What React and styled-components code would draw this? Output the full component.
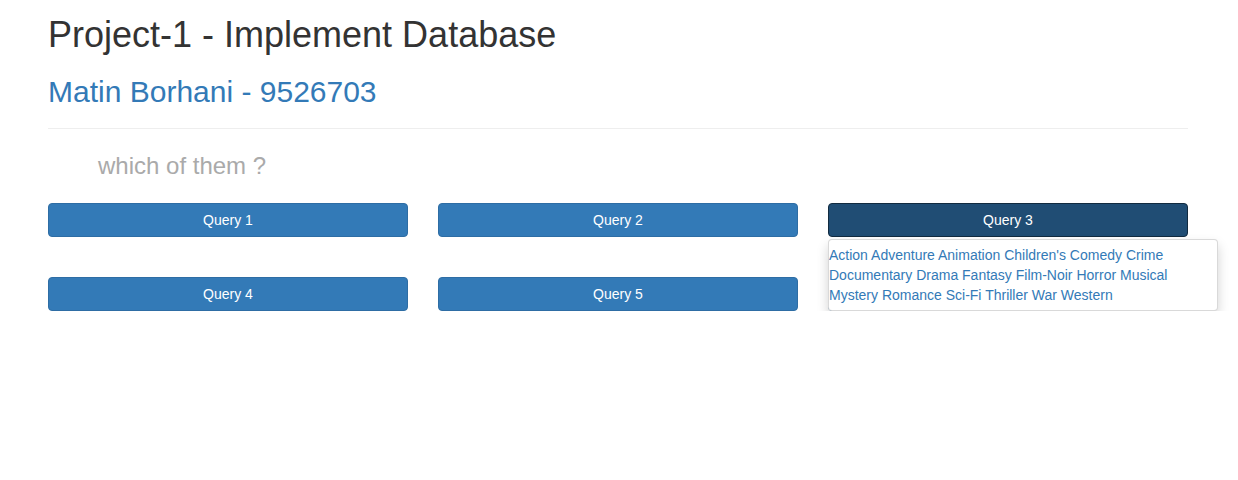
import React from 'react';
import styled, { createGlobalStyle } from 'styled-components';

const GlobalStyle = createGlobalStyle`
    body {
        margin: 0;
        background: #fff;
        font-family: "Liberation Sans", Arial, Helvetica, sans-serif;
        font-size: 14px;
        line-height: 1.42857;
        color: #333;
    }
`

const Page = styled.div`
    width: 1140px;
    padding: 15px 0 0 48px;
`

const Title = styled.h1`
    font-size: 36px;
    font-weight: 500;
    line-height: 1.1;
    margin: 0 0 20px 0;
    color: #333;
`

const Subtitle = styled.h2`
    font-size: 30px;
    font-weight: 500;
    line-height: 1.1;
    margin: 0;
    color: #337ab7;
`

const Rule = styled.hr`
    border: 0;
    border-top: 1px solid #eee;
    margin: 20px 0 24px 0;
`

const Question = styled.h3`
    font-size: 24px;
    font-weight: 500;
    line-height: 1.1;
    margin: 0 0 24px 0;
    padding-left: 50px;
    color: #aaa;
`

const Grid = styled.div`
    display: grid;
    grid-template-columns: repeat(3, 360px);
    column-gap: 30px;
    row-gap: 40px;
`

const Cell = styled.div`
    position: relative;
`

const QueryButton = styled.button`
    display: block;
    width: 100%;
    height: 34px;
    padding: 6px 12px;
    font-family: inherit;
    font-size: 14px;
    line-height: 20px;
    color: #fff;
    background-color: ${p => (p.$active ? '#204d74' : '#337ab7')};
    border: 1px solid ${p => (p.$active ? '#122b40' : '#2e6da4')};
    border-radius: 4px;
    cursor: pointer;
`

const Menu = styled.div`
    position: absolute;
    top: 100%;
    left: 0;
    z-index: 10;
    margin-top: 2px;
    width: 390px;
    box-sizing: border-box;
    padding: 5px 0;
    background: #fff;
    border: 1px solid rgba(0, 0, 0, 0.15);
    border-radius: 4px;
    box-shadow: 0 6px 12px rgba(0, 0, 0, 0.175);
    font-size: 14px;
    line-height: 20px;
`

const Genre = styled.a`
    color: #337ab7;
    text-decoration: none;
`

const genres = [
    'Action', 'Adventure', 'Animation', "Children's", 'Comedy', 'Crime',
    'Documentary', 'Drama', 'Fantasy', 'Film-Noir', 'Horror', 'Musical',
    'Mystery', 'Romance', 'Sci-Fi', 'Thriller', 'War', 'Western'
]

const App = () => {
    return (
        <>
            <GlobalStyle />
            <Page>
                <Title>Project-1 - Implement Database</Title>
                <Subtitle>Matin Borhani - 9526703</Subtitle>
                <Rule />
                <Question>which of them ?</Question>
                <Grid>
                    <Cell><QueryButton>Query 1</QueryButton></Cell>
                    <Cell><QueryButton>Query 2</QueryButton></Cell>
                    <Cell>
                        <QueryButton $active>Query 3</QueryButton>
                        <Menu>
                            {genres.map((g, i) => (
                                <React.Fragment key={g}>
                                    <Genre href="#">{g}</Genre>{i < genres.length - 1 ? ' ' : ''}
                                </React.Fragment>
                            ))}
                        </Menu>
                    </Cell>
                    <Cell><QueryButton>Query 4</QueryButton></Cell>
                    <Cell><QueryButton>Query 5</QueryButton></Cell>
                    {/* hidden behind the open menu, only its bottom edge shows */}
                    <Cell><QueryButton aria-label="Query 6" /></Cell>
                </Grid>
            </Page>
        </>
    )
}

export default App;
